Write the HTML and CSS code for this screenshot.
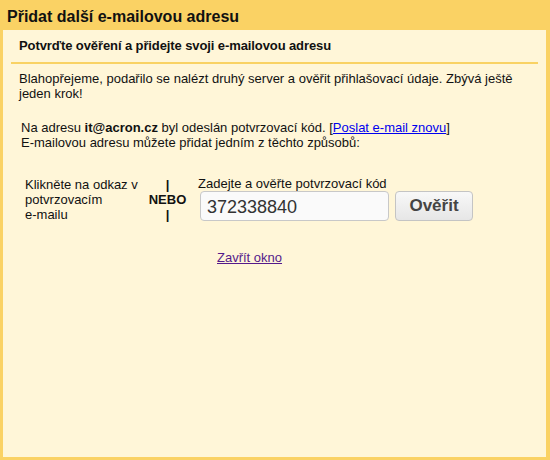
FILE: index.html
```html
<!DOCTYPE html>
<html>
<head>
<meta charset="utf-8">
<link rel="stylesheet" href="styles.css">
</head>
<body>
<div class="dialog">
  <h1 class="title">Přidat další e-mailovou adresu</h1>
  <div class="panel">
    <div class="head">
      <h2 class="head-text">Potvrďte ověření a přidejte svoji e-mailovou adresu</h2>
    </div>
    <p class="intro">Blahopřejeme, podařilo se nalézt druhý server a ověřit přihlašovací údaje. Zbývá ještě jeden krok!</p>
    <p class="info">Na adresu <b>it@acron.cz</b> byl odeslán potvrzovací kód. [<a href="#" class="resend">Poslat e-mail znovu</a>]<br>E-mailovou adresu můžete přidat jedním z těchto způsobů:</p>
    <div class="options">
      <div class="opt-link">Klikněte na odkaz v potvrzovacím <span class="nowrap">e-mailu</span></div>
      <div class="opt-or">|<br>NEBO<br>|</div>
      <div class="opt-code">
        <div class="code-label">Zadejte a ověřte potvrzovací kód</div>
        <div class="code-row">
          <input class="code-input" type="text" value="372338840">
          <button class="verify">Ověřit</button>
        </div>
      </div>
    </div>
    <div class="close-row"><a href="#" class="close">Zavřít okno</a></div>
  </div>
</div>
</body>
</html>
```

FILE: styles.css
```css
html, body {
  margin: 0;
  padding: 0;
}
body {
  background: #fad264;
  font-family: "Liberation Sans", Arial, sans-serif;
  font-size: 13px;
  color: #222;
  width: 550px;
  height: 460px;
  overflow: hidden;
}
.dialog {
  display: flex;
  flex-direction: column;
  height: 460px;
}
.title {
  margin: 0;
  height: 30px;
  box-sizing: border-box;
  padding: 7px 0 0 7px;
  font-size: 16px;
  line-height: 20px;
  font-weight: bold;
  color: #111;
}
.panel {
  flex: 1;
  margin: 0 4px 3px 3px;
  background: #fff6d8;
  padding: 0 8px;
}
.head {
  border-bottom: 2px solid #f9d264;
  padding: 8px 8px 0 8px;
  height: 24px;
}
.head-text {
  margin: 0;
  font-size: 13px;
  line-height: 15px;
  font-weight: bold;
  color: #111;
  letter-spacing: -0.1px;
}
.intro {
  margin: 7px 0 0 0;
  padding: 0 8px;
  line-height: 15px;
  color: #111;
}
.info {
  margin: 19px 0 0 0;
  padding: 0 10px;
  line-height: 15px;
  color: #111;
}
.resend {
  color: #0000ee;
}
.options {
  display: flex;
  margin-top: 26px;
  padding-left: 14px;
  line-height: 15px;
  color: #111;
}
.opt-link {
  width: 116px;
  padding-top: 1px;
}
.nowrap {
  white-space: nowrap;
}
.opt-or {
  width: 53px;
  text-align: center;
  font-weight: bold;
  padding-top: 1px;
  padding-right: 4px;
}
.opt-code {
  display: flex;
  flex-direction: column;
}
.code-label {
  line-height: 15px;
}
.code-row {
  display: flex;
  gap: 6px;
  padding-left: 2px;
}
.code-input {
  width: 189px;
  height: 30px;
  box-sizing: border-box;
  border: 1px solid #c8c8c8;
  border-radius: 4px;
  background: #fafafa;
  font-family: "Liberation Sans", Arial, sans-serif;
  font-size: 18px;
  color: #333;
  padding: 2px 6px 0 6px;
  margin: 0;
}
.verify {
  width: 78px;
  height: 30px;
  box-sizing: border-box;
  border: 1px solid #c4c4c4;
  border-radius: 4px;
  background: linear-gradient(#f8f8f8, #e6e6e6);
  font-family: "Liberation Sans", Arial, sans-serif;
  font-size: 17px;
  font-weight: bold;
  color: #444;
  padding: 0;
  margin: 0;
}
.close-row {
  margin-top: 28px;
  padding-left: 206px;
  line-height: 15px;
}
.close {
  color: #551a8b;
}
```
